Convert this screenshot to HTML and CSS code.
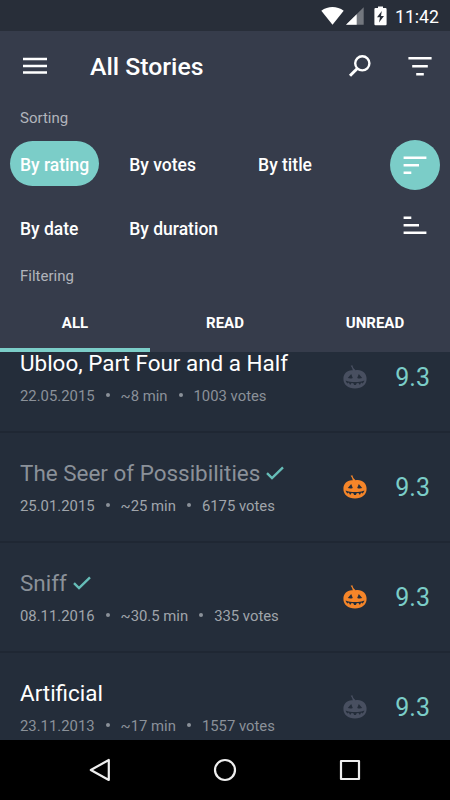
FILE: index.html
```html
<!DOCTYPE html>
<html lang="en">
<head>
    <meta charset="UTF-8">
    <meta name="viewport" content="width=device-width, initial-scale=1.0">
    <title>All Stories</title>
    <link rel="stylesheet" href="styles.css">
</head>
<body>
    <!-- icons used more than once -->
    <svg class="hidden">
        <symbol id="pumpkin" viewBox="0 0 24 24">
            <path fill-rule="evenodd" d="M7.6 .8 L9.4 .3 C9.7 2.2 10.6 3.8 12.6 5.2 C19 4.2 23.6 8.2 23.6 13.8 C23.6 19.8 19 23.4 12 23.4 C5 23.4 .4 19.8 .4 13.8 C.4 8.6 4.2 4.8 9.8 5.3 C9.4 3.5 8.8 2.2 7.6 .8 Z
            M8.2 9 L4.8 13 Q7.4 13.9 9.8 12.9 Z M15.8 9 L14.2 12.9 Q16.6 13.9 19.2 13 Z
            M2.6 15.4 C8 17.4 16 17.4 21.4 15.4 C21.1 16.8 20.2 17.8 19.4 18.4 L18.2 17.6 L16.9 20 L15.4 18.1 L13.7 18.3 L12.9 19.9 L11.1 19.9 L10.3 18.3 L8.6 18.1 L7.1 20 L5.8 17.6 L4.6 18.4 C3.8 17.8 2.9 16.8 2.6 15.4 Z"/>
        </symbol>
        <symbol id="check" viewBox="0 0 18 14">
            <path d="M1 7.2 L6 12 L17 1.4" fill="none" stroke="currentColor" stroke-width="2.4"/>
        </symbol>
    </svg>

    <div class="status-bar">
        <svg class="wifi" width="23" height="18" viewBox="0 0 23 18"><path d="M.3 3.8 C7 -1.2 16 -1.2 22.7 3.8 L11.5 17.7 Z"/></svg>
        <svg class="signal" width="18" height="18" viewBox="0 0 18 18"><path d="M17.7 .2 V17.8 H0 Z" opacity=".35"/><path d="M10.7 7.2 V17.8 H0 Z"/></svg>
        <svg class="battery" width="13" height="20" viewBox="0 0 13 20"><path fill-rule="evenodd" d="M4 .4 H9 V2 H11.5 Q12.6 2 12.6 3.2 V18.2 Q12.6 19.3 11.5 19.3 H1.5 Q.4 19.3 .4 18.2 V3.2 Q.4 2 1.5 2 H4 Z M7.8 5 L3 11.3 H6 L5 16.6 L10 9.9 H7 Z"/></svg>
        <span class="clock">11:42</span>
    </div>

    <header class="header">
        <div class="toolbar">
            <svg class="menu-icon" width="24" height="18" viewBox="0 0 24 18"><path d="M0 2 H24 M0 9 H24 M0 15.5 H24" stroke-width="2.6"/></svg>
            <h1>All Stories</h1>
            <svg width="24" height="24" viewBox="0 0 24 24"><circle cx="14.3" cy="9.3" r="7.1" fill="none" stroke-width="2.4"/><path d="M9.3 14.5 L2 21.8" stroke-width="3"/></svg>
            <svg class="filter-icon" width="24" height="20" viewBox="0 0 24 20"><path d="M.4 2.2 H23.6 M4.2 10.2 H19.8 M8.2 18.3 H15.8" stroke-width="2.6"/></svg>
        </div>

        <h2>Sorting</h2>
        <div class="sorting">
            <div class="chips">
                <button class="chip active">By rating</button>
                <button class="chip">By votes</button>
                <button class="chip">By title</button>
                <button class="chip">By date</button>
                <button class="chip">By duration</button>
            </div>
            <div class="order">
                <button class="round active"><svg width="24" height="20" viewBox="0 0 24 20"><path d="M.6 2.7 H23.4 M.6 10.2 H16 M.6 17.8 H8.3" stroke-width="2.6"/></svg></button>
                <button class="round"><svg width="24" height="20" viewBox="0 0 24 20"><path d="M.6 2.7 H8.3 M.6 10.2 H16 M.6 17.8 H23.4" stroke-width="2.6"/></svg></button>
            </div>
        </div>

        <h2 class="filtering">Filtering</h2>
        <nav class="tabs">
            <a class="tab active">ALL</a>
            <a class="tab">READ</a>
            <a class="tab">UNREAD</a>
        </nav>
    </header>

    <main class="list">
        <article class="story first">
            <div class="info">
                <h3>Ubloo, Part Four and a Half</h3>
                <p><span>22.05.2015</span><i></i><span>~8 min</span><i></i><span>1003 votes</span></p>
            </div>
            <svg class="pumpkin"><use href="#pumpkin"/></svg>
            <span class="rating">9.3</span>
        </article>
        <article class="story read">
            <div class="info">
                <h3>The Seer of Possibilities <svg class="check"><use href="#check"/></svg></h3>
                <p><span>25.01.2015</span><i></i><span>~25 min</span><i></i><span>6175 votes</span></p>
            </div>
            <svg class="pumpkin liked"><use href="#pumpkin"/></svg>
            <span class="rating">9.3</span>
        </article>
        <article class="story read">
            <div class="info">
                <h3>Sniff <svg class="check"><use href="#check"/></svg></h3>
                <p><span>08.11.2016</span><i></i><span>~30.5 min</span><i></i><span>335 votes</span></p>
            </div>
            <svg class="pumpkin liked"><use href="#pumpkin"/></svg>
            <span class="rating">9.3</span>
        </article>
        <article class="story">
            <div class="info">
                <h3>Artificial</h3>
                <p><span>23.11.2013</span><i></i><span>~17 min</span><i></i><span>1557 votes</span></p>
            </div>
            <svg class="pumpkin"><use href="#pumpkin"/></svg>
            <span class="rating">9.3</span>
        </article>
    </main>

    <footer class="nav-bar">
        <svg width="24" height="26" viewBox="0 0 24 26"><path d="M20.8 3 V23 L2.8 13 Z"/></svg>
        <svg width="24" height="26" viewBox="0 0 24 26"><circle cx="12" cy="13" r="10"/></svg>
        <svg width="24" height="26" viewBox="0 0 24 26"><rect x="3" y="4" width="18" height="18"/></svg>
    </footer>
</body>
</html>
```

FILE: styles.css
```css
* {
    margin: 0;
    padding: 0;
    box-sizing: border-box;
}

body {
    display: flex;
    flex-direction: column;
    height: 800px;
    overflow: hidden;
    background: #242d3a;
    color: #fff;
    font-family: Roboto, sans-serif;
}

svg {
    display: block;
    flex: none;
}

button {
    border: none;
    background: none;
    color: #fff;
    font-family: inherit;
}

.hidden {
    display: none;
}

.status-bar {
    display: flex;
    align-items: center;
    justify-content: flex-end;
    flex: none;
    height: 31px;
    padding-right: 11px;
    background: #282e39;
    fill: #fff;
}

.signal {
    margin-left: 2px;
}

.battery {
    margin: 0 8px 0 10px;
}

.clock {
    padding-top: 2px;
    font-size: 17.7px;
}

.header {
    flex: none;
    height: 321px;
    background: #363c4b;
}

.toolbar {
    display: flex;
    align-items: center;
    height: 70px;
    padding: 0 18px 0 23px;
    stroke: #fff;
}

.toolbar h1 {
    flex: 1;
    margin-left: 43px;
    padding-top: 2px;
    font-size: 24.8px;
    font-weight: 500;
    line-height: 28px;
}

.filter-icon {
    margin-left: 36px;
}

.header h2 {
    margin-left: 20px;
    padding-top: 7px;
    height: 40px;
    color: #b1b4bb;
    font-size: 15px;
    font-weight: 400;
    line-height: 20px;
}

.sorting {
    display: flex;
    justify-content: space-between;
    height: 117px;
    padding: 0 10px;
}

.chips {
    display: grid;
    grid-template-columns: repeat(3, auto);
    grid-auto-rows: 45px;
    column-gap: 20px;
    row-gap: 19px;
    justify-items: start;
}

.chip {
    padding: 2px 10px 0;
    border-radius: 23px;
    font-size: 17.5px;
    font-weight: 500;
}

.chip.active,
.round.active {
    background: #7bcdc8;
}

.order {
    display: flex;
    flex-direction: column;
    gap: 10px;
    margin-top: -1px;
}

.round {
    display: flex;
    align-items: center;
    justify-content: center;
    width: 50px;
    height: 50px;
    border-radius: 50%;
    stroke: #fff;
}

.header .filtering {
    height: 36px;
    padding-top: 8px;
}

.tabs {
    display: grid;
    grid-template-columns: repeat(3, 1fr);
    height: 58px;
}

.tab {
    height: 58px;
    padding-top: 2px;
    font-size: 15px;
    font-weight: 700;
    line-height: 54px;
    text-align: center;
}

.tab.active {
    border-bottom: 4px solid #7bcdc8;
}

.list {
    flex: 1;
    overflow: hidden;
}

.story {
    display: flex;
    align-items: center;
    height: 110px;
    padding: 0 20px;
    border-bottom: 2px solid #1f2733;
}

/* list is scrolled a little under the header */
.story.first {
    margin-top: -29px;
}

.info {
    flex: 1;
    padding-top: 4px;
}

.info h3 {
    display: flex;
    align-items: center;
    gap: 6px;
    font-size: 22.45px;
    font-weight: 400;
    line-height: 20px;
}

.info p {
    display: flex;
    align-items: center;
    margin-top: 13px;
    color: #8b9199;
    font-size: 14.85px;
    line-height: 20px;
}

.info i {
    width: 4px;
    height: 4px;
    margin: -2px 11px 0;
    border-radius: 50%;
    background: #8b9199;
}

.read h3 {
    color: #8b9199;
}

.read p {
    color: #a0a5ab;
}

.check {
    width: 18px;
    height: 14px;
    color: #66bdb8;
}

.pumpkin {
    width: 24px;
    height: 24px;
    margin-right: 28px;
    fill: #484f60;
}

.pumpkin.liked {
    fill: #f58529;
}

.rating {
    color: #7bcdc8;
    font-size: 25px;
}

.nav-bar {
    display: flex;
    align-items: center;
    justify-content: space-between;
    flex: none;
    height: 60px;
    padding: 0 88px;
    background: #000;
    fill: none;
    stroke: #eee;
    stroke-width: 2.2;
    stroke-linejoin: round;
}
```
